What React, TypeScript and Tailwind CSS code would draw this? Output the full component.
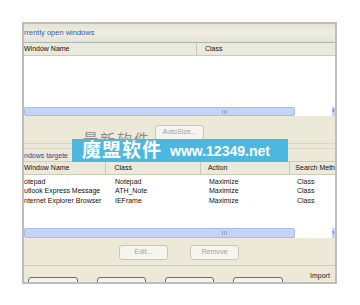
import React from "react";

const font = "font-['Liberation_Sans',_'Noto_Sans_CJK_SC',_sans-serif]";

function ScrollBar({ h }: { h: string }) {
  return (
    <div className={`flex ${h} shrink-0 bg-[#f3f3ef]`}>
      <div className="flex w-[271px] items-center justify-center rounded-[2px] border border-[#a9bce8] bg-[#c4d4f6]">
        <div className="flex gap-[1px] pl-[130px]">
          <span className="h-[4px] w-[1px] bg-[#8fa6dc]" />
          <span className="h-[4px] w-[1px] bg-[#8fa6dc]" />
          <span className="h-[4px] w-[1px] bg-[#8fa6dc]" />
        </div>
      </div>
      <div className="w-[37px] bg-white" />
      <div className="flex w-[3px] items-center bg-[#c7d5f5] text-[7px] font-bold text-[#4d6185]">
        ›
      </div>
    </div>
  );
}

function Btn({ label, w }: { label: string; w: string }) {
  return (
    <div
      className={`flex h-[15px] ${w} items-center justify-center rounded-[3px] border border-[#c9c6b5] bg-[#f5f4ef] text-[7px] text-[#a3a29a]`}
    >
      {label}
    </div>
  );
}

export default function App() {
  const rows = [
    ["otepad", "Notepad", "Maximize", "Class"],
    ["utlook Express Message", "ATH_Note", "Maximize", "Class"],
    ["nternet Explorer Browser", "IEFrame", "Maximize", "Class"],
  ];

  return (
    <div className={`relative h-[305px] w-[360px] overflow-hidden bg-white pl-[22px] pt-[22px] ${font}`}>
      <div className="flex h-[262px] w-[315px] flex-col overflow-hidden border-2 border-[#bdbdbd] bg-[#ece9d8] text-[7px] text-[#111]">
        {/* currently open windows */}
        <div className="flex h-[18px] shrink-0 flex-col justify-center bg-gradient-to-b from-[#e6e3d3] via-[#efede2] to-[#e6e3d3] text-[7.5px] text-[#3a5aa8]">
          rrently open windows
        </div>
        <div className="h-[1px] shrink-0 bg-[#a9b6ba]" />
        <div className="flex h-[13px] shrink-0 items-center border-b border-[#cdcab8] bg-[#ebe9dc]">
          <div className="w-[173px] border-r border-[#cac7b6] leading-[12px]">Window Name</div>
          <div className="pl-[8px]">Class</div>
        </div>
        <div className="h-[51px] shrink-0 bg-white" />
        <ScrollBar h="h-[9px]" />

        {/* middle */}
        <div className="flex h-[45px] shrink-0 flex-col">
          <div className="flex pl-[131px] pt-[9px]">
            <Btn label="AutoSize..." w="w-[49px]" />
          </div>
          <div className="mt-[3px] h-[1px] bg-[#dad6c6]" />
          <div className="mt-[4px] h-[1px] bg-[#dad6c6]" />
          <div className="mt-[2px] text-[7px] text-[#2c4b98]">ndows targete</div>
        </div>
        <div className="h-[1px] shrink-0 bg-[#cfcbba]" />
        <div className="flex h-[13px] shrink-0 items-center border-b border-[#cdcab8] bg-[#ebe9dc]">
          <div className="w-[83px] border-r border-[#cac7b6] leading-[12px]">Window Name</div>
          <div className="w-[95px] border-r border-[#cac7b6] pl-[8px] leading-[12px]">Class</div>
          <div className="w-[90px] border-r border-[#cac7b6] pl-[7px] leading-[12px]">Action</div>
          <div className="whitespace-nowrap pl-[5px]">Search Meth</div>
        </div>
        <div className="h-[53px] shrink-0 bg-white pt-[2px]">
          {rows.map((r) => (
            <div key={r[0]} className="flex h-[9.5px] items-center whitespace-nowrap">
              <div className="w-[83px]">{r[0]}</div>
              <div className="w-[95px] pl-[8px]">{r[1]}</div>
              <div className="w-[90px] pl-[7px]">{r[2]}</div>
              <div className="pl-[5px]">{r[3]}</div>
            </div>
          ))}
        </div>
        <ScrollBar h="h-[10px]" />

        {/* edit / remove */}
        <div className="flex h-[27px] shrink-0 gap-[22px] pl-[95px] pt-[7px]">
          <Btn label="Edit..." w="w-[49px]" />
          <Btn label="Remove" w="w-[49px]" />
        </div>
        <div className="h-[1px] shrink-0 bg-[#d3cfbf]" />
        <div className="relative flex h-[14px] shrink-0 pl-[4px] pt-[11px]">
          <div className="flex gap-[19px]">
            <div className="h-[6px] w-[50px] rounded-t-[3px] border border-[#6e6e66] bg-[#f4f3ee]" />
            <div className="h-[6px] w-[49px] rounded-t-[3px] border border-[#6e6e66] bg-[#f4f3ee]" />
            <div className="h-[6px] w-[49px] rounded-t-[3px] border border-[#6e6e66] bg-[#f4f3ee]" />
            <div className="h-[6px] w-[50px] rounded-t-[3px] border border-[#6e6e66] bg-[#f4f3ee]" />
          </div>
          <div className="absolute left-[286px] top-[5px] text-[7px] text-[#222]">Import</div>
        </div>
      </div>

      {/* watermark overlay: only the top of the grey text peeks out above the banner */}
      <div className="absolute left-[83px] top-[132px] h-[7px] overflow-hidden">
        <div className="text-[15px] leading-none tracking-[2px] text-[#8c8c8c]">最新软件</div>
      </div>
      <div className="absolute left-[72px] top-[139px] flex h-[23px] w-[216px] items-center bg-[#4cb8df] pl-[10px] text-white">
        <span className="text-[19px] font-bold leading-none tracking-[1px]">魔盟软件</span>
        <span className="ml-[8px] text-[14px] font-bold leading-none">www.12349.net</span>
      </div>
    </div>
  );
}
